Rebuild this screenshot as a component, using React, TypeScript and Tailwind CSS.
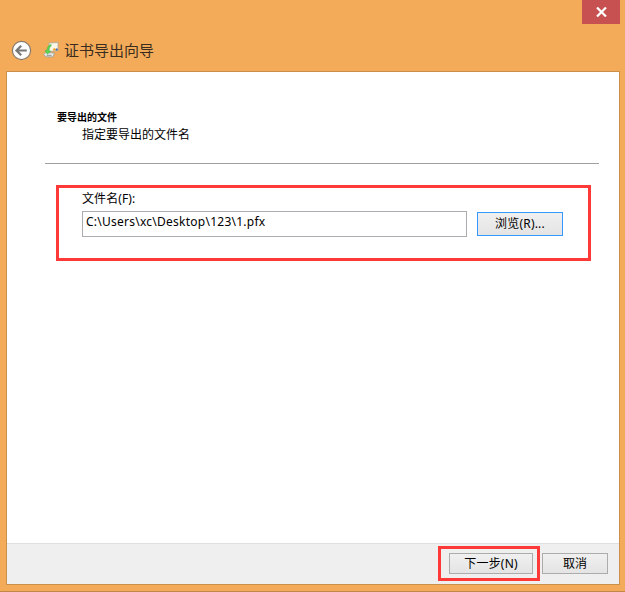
import type { ReactNode } from "react"

function BackIcon() {
    return (
        <svg width="21" height="21" viewBox="0 0 21 21" fill="none">
            <circle cx="10.5" cy="10.5" r="9.1" fill="#fdfdfd" stroke="#85796b" strokeWidth="1.2"/>
            <path d="M5.6 10.5H15.8M10.2 5.8L5.5 10.5L10.2 15.2" stroke="#777777" strokeWidth="2.2"/>
        </svg>
    )
}

function CertificateIcon() {
    return (
        <svg width="16" height="16" viewBox="0 0 16 16">
            <path d="M6 1L15 .5V8.5L6 9.5Z" fill="#fbf6e6" stroke="#a9a79c" strokeWidth=".8"/>
            <path d="M10 7.2C10.4 5.8 12.2 5.8 12.8 7.2V8.2L10 8.5Z" fill="#eda31c"/>
            <path d="M12.8 6.5H14.6V8.5H12.8Z" fill="#3565bd"/>
            <path d="M.6 12.5L3 10.5L11.5 11L9.8 14.9L3 14.8Z" fill="#eceeed" stroke="#969a98" strokeWidth=".8"/>
            <path d="M3.6 13.3H8.6" stroke="#8b9290" strokeWidth="1"/>
            <path d="M8.2 2.4C5.2 3.2 4.2 5.2 3.9 8.2L2 8.6L4.4 12.2L7.8 9.2L6 8.8C6 6.8 6.6 5 8.2 4Z" fill="#5cd455" stroke="#3bab3c" strokeWidth=".4"/>
        </svg>
    )
}

function Button({ className, children }: { className: string, children: ReactNode }) {
    return (
        <button className={`border bg-gradient-to-b from-[#f0f0f0] to-[#e4e4e4] flex items-center justify-center whitespace-nowrap ${className}`}>
            {children}
        </button>
    )
}

export default function App() {
    return (
        <div className="w-[625px] h-[592px] bg-[#f3ab5a] border-b border-[#c08746] flex flex-col overflow-hidden text-black text-[12px] leading-4 font-['Noto_Sans','Noto_Sans_CJK_SC',sans-serif]">
            {/* title bar */}
            <div className="h-6 pr-[5px] flex justify-end shrink-0">
                <button aria-label="关闭" className="w-[38px] h-6 bg-[#c75050] flex items-center justify-center">
                    <svg width="12" height="10" viewBox="0 0 12 10" fill="none">
                        <path d="M2 .5L11 9.5M11 .5L2 9.5" stroke="white" strokeWidth="2.2"/>
                    </svg>
                </button>
            </div>
            <div className="h-[47px] pl-[11px] pt-1.5 flex items-center shrink-0">
                <BackIcon/>
                <div className="ml-[11px] pb-px">
                    <CertificateIcon/>
                </div>
                <h1 className="ml-[5px] pb-0.5 text-[15px] leading-5 text-[#3a2d20]">证书导出向导</h1>
            </div>

            {/* wizard page */}
            <div className="ml-1.5 w-[614px] h-[514px] border border-[#c98f4b] bg-white flex flex-col">
                <div className="flex-1">
                    <div className="ml-[38px] w-[554px] h-[92px] border-b border-[#a0a0a0] pt-[37px] pl-3">
                        <h2 className="text-[10px] leading-4 font-bold">要导出的文件</h2>
                        <p className="ml-[25px] mt-0.5">指定要导出的文件名</p>
                    </div>
                    <div className="ml-[49px] mt-[21px] w-[535px] h-[76px] border-3 border-[#ff3838] pl-[23px] pt-[3px]">
                        <label htmlFor="file" className="block h-5 tracking-[0.1px]">文件名(F):</label>
                        <div className="flex items-center gap-2.5">
                            <input id="file" defaultValue="C:\Users\xc\Desktop\123\1.pfx" className="w-[385px] h-[26px] border border-[#ababb0] px-[3px] pb-1.5 tracking-[0.25px] outline-none"/>
                            <Button className="w-[86px] h-6 border-[#3399ff] tracking-[0.2px]">浏览(R)...</Button>
                        </div>
                    </div>
                </div>

                {/* footer */}
                <div className="h-[41px] border-t border-[#dfdfdf] bg-[#efefef] flex items-start justify-end pt-0.5 pr-[11px] gap-0.5">
                    <div className="w-[102px] h-[35px] border-3 border-[#ff3838] pl-2 pt-1">
                        <Button className="w-[84px] h-[21px] border-[#acacac] tracking-[0.2px]">下一步(N)</Button>
                    </div>
                    <Button className="mt-[7px] w-[66px] h-[21px] border-[#acacac]">取消</Button>
                </div>
            </div>
        </div>
    )
}
